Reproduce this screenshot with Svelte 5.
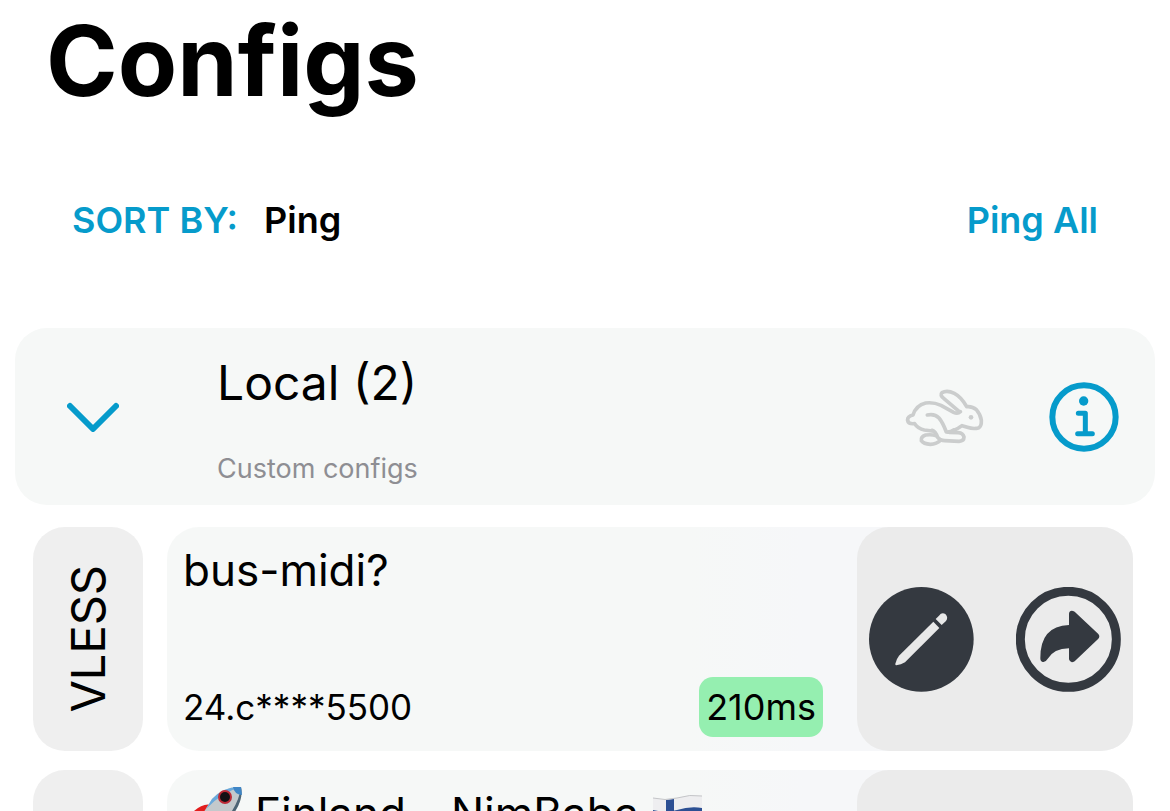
<script lang="ts">
  type Config = {
    name: string;
    protocol?: string;
    host?: string;
    ping?: number;
    rocket?: boolean;
    flag?: boolean;
  };

  const configs: Config[] = [
    { name: 'bus-midi?', protocol: 'VLESS', host: '24.c****5500', ping: 210 },
    { name: 'Finland - NimBaba', rocket: true, flag: true },
  ];

  let sortBy = $state('Ping');
  let open = $state(true);
</script>

<main>
  <h1>Configs</h1>

  <div class="toolbar">
    <label for="sort">SORT BY:</label>
    <select id="sort" bind:value={sortBy}>
      <option>Ping</option>
    </select>
    <button class="ping-all" type="button">Ping All</button>
  </div>

  <section class="group">
    <button class="toggle" type="button" aria-label="Toggle group" aria-expanded={open} onclick={() => (open = !open)}>
      <svg width="52" height="30" viewBox="0 0 52 30" fill="none" stroke="currentColor" stroke-width="6" stroke-linecap="round" stroke-linejoin="round">
        <path d="M3 4 L26 27 L49 4" />
      </svg>
    </button>
    <div class="group-text">
      <h2>Local ({configs.length})</h2>
      <p>Custom configs</p>
    </div>
    <button class="rabbit" type="button" aria-label="Fastest">
      <svg width="80" height="60" viewBox="45 81 240 180" fill="none" stroke="currentColor" stroke-width="11" stroke-linecap="round" stroke-linejoin="round">
        <path d="M211 155 Q203 163 191 157 L153 136 Q131 126 107 129 Q78 136 69 165 Q51 169 53 182 Q55 193 74 191 Q84 206 103 210 L126 213" />
        <path d="M207 154 L162 116 Q148 105 156 98 Q171 89 193 100 Q214 111 230 140 Q247 138 259 149 Q272 164 274 181 Q275 199 265 204 Q250 208 232 202 L216 197 Q203 207 189 212" />
        <path d="M112 165 Q134 160 147 174 Q158 187 169 216 Q181 217 191 210" />
        <path d="M126 211 Q137 215 143 232 Q151 242 164 242 L207 244 Q222 243 222 231 Q219 219 205 218 L178 217" />
        <path d="M137 227 Q127 223 107 225 Q92 230 94 242 Q101 252 121 253 Q140 252 153 240" />
        <circle cx="243" cy="172" r="7" fill="currentColor" stroke="none" />
      </svg>
    </button>
    <button class="info" type="button" aria-label="Group info">
      <svg width="70" height="70" viewBox="0 0 210 210" fill="none" stroke="currentColor" stroke-linecap="round" stroke-linejoin="round">
        <circle cx="105" cy="105" r="95" stroke-width="18" />
        <circle cx="104" cy="57" r="14" fill="currentColor" stroke="none" />
        <path d="M88 94 H109 V154 M86 155 H130" stroke-width="15" />
      </svg>
    </button>
  </section>

  {#if open}
    <ul>
      {#each configs as config}
        <li>
          <div class="protocol"><span>{config.protocol ?? ''}</span></div>
          <article>
            <div class="details">
              <h3>
                {#if config.rocket}
                  <svg class="emoji" viewBox="-5 0 60 54" role="img" aria-label="Rocket">
                    <path d="M24 19 Q14 16 3 28 L16 30Z" fill="#e21d1d" />
                    <path d="M38 34 Q41 44 29 53 L26 41Z" fill="#b51218" />
                    <path d="M53 1 Q36 0 24 13 L12 32 L24 44 L42 32 Q56 16 53 1Z" fill="#c3c9cc" />
                    <path d="M53 1 Q36 0 24 13 L18 23 Q34 6 53 1Z" fill="#69a9dc" />
                    <path d="M53 1 Q56 16 42 32 L36 36 Q51 18 53 1Z" fill="#4d6474" />
                    <path d="M53 1 L45 1 Q46 8 54 9Z" fill="#3f86c6" />
                    <circle cx="37" cy="11" r="7" fill="#bd2935" />
                    <circle cx="37" cy="11" r="5" fill="#141014" />
                    <path d="M12 34 L5 51 L22 44Z" fill="#f4a52b" />
                  </svg>
                {/if}
                <span>{config.name}</span>
                {#if config.flag}
                  <svg class="emoji" viewBox="0 0 60 54" role="img" aria-label="Flag of Finland">
                    <path d="M2 12 Q14 15 26 12 Q39 8 51 10 V42 Q39 40 26 44 Q14 47 2 44Z" fill="#eeeef0" />
                    <path d="M15 14 L23 13 V45 L15 46Z" fill="#2c4f93" />
                    <path d="M2 24 Q14 27 26 24 Q39 20 51 22 V31 Q39 29 26 33 Q14 36 2 33Z" fill="#2c4f93" />
                    <path d="M2 12 Q14 15 26 12 Q39 8 51 10" fill="none" stroke="#c4c5c8" />
                  </svg>
                {/if}
              </h3>
              <div class="meta">
                <span>{config.host ?? ''}</span>
                {#if config.ping}
                  <span class="ping">{config.ping}ms</span>
                {/if}
              </div>
            </div>
            <div class="actions">
              <button type="button" aria-label="Edit {config.name}">
                <svg width="105" height="105" viewBox="0 0 315 315">
                  <circle cx="157" cy="157" r="157" fill="currentColor" />
                  <path d="M193 104 L211 123 L108 226 Q96 233 82 235 Q78 235 79 230 Q82 216 90 206Z" fill="#e8e8e8" />
                  <path d="M200 96 L210 86 Q218 75 229 81 Q239 91 231 102 L218 114Z" fill="#e8e8e8" />
                </svg>
              </button>
              <button type="button" aria-label="Share {config.name}">
                <svg width="105" height="105" viewBox="0 0 315 315">
                  <circle cx="157" cy="157" r="144" fill="none" stroke="currentColor" stroke-width="27" />
                  <path d="M159 114 V80 Q161 67 176 74 L247 141 Q253 148 247 155 L176 223 Q163 231 159 217 V184 Q113 184 94 217 Q88 227 80 225 Q73 224 73 214 Q72 117 159 114Z" fill="currentColor" />
                </svg>
              </button>
            </div>
          </article>
        </li>
      {/each}
    </ul>
  {/if}
</main>

<style>
  :global(body) {
    margin: 0;
    background: #fff;
  }
  main {
    box-sizing: border-box;
    height: 100vh;
    overflow: hidden;
    font-family: Inter, 'Liberation Sans', sans-serif;
    color: #000;
  }
  h1, h2, h3, p, ul {
    margin: 0;
    padding: 0;
    font-weight: 400;
  }
  button, select {
    margin: 0;
    padding: 0;
    border: none;
    background: none;
    font: inherit;
    color: inherit;
    appearance: none;
    cursor: pointer;
  }
  svg {
    display: block;
    flex-shrink: 0;
  }
  h1 {
    padding: 0 46px;
    font-size: 97px;
    font-weight: 700;
    line-height: 122px;
  }
  .toolbar {
    display: flex;
    align-items: center;
    gap: 26px;
    padding: 0 72px;
    margin: 74px 0 84px;
    font-size: 36px;
    font-weight: 600;
    line-height: 48px;
  }
  .toolbar label, .ping-all {
    color: #069bcb;
  }
  .ping-all {
    margin-left: auto;
  }
  .group {
    display: flex;
    align-items: center;
    height: 177px;
    margin: 0 15px 22px;
    padding: 0 36px 0 52px;
    box-sizing: border-box;
    border-radius: 32px;
    background: #f6f8f7;
  }
  .toggle {
    color: #069bcb;
  }
  .group-text {
    flex: 1;
    padding: 4px 0 0 98px;
  }
  h2 {
    font-size: 48px;
    line-height: 64px;
  }
  .group-text p {
    margin-top: 36px;
    font-size: 27px;
    line-height: 36px;
    color: #8e8e93;
  }
  .rabbit {
    margin-right: 64px;
    color: #cbcdcd;
  }
  .info {
    color: #069bcb;
  }
  ul {
    display: flex;
    flex-direction: column;
    gap: 19px;
    padding: 0 37px 0 33px;
    list-style: none;
  }
  li {
    display: flex;
    gap: 24px;
    height: 224px;
    flex-shrink: 0;
  }
  .protocol {
    display: flex;
    align-items: center;
    justify-content: center;
    width: 110px;
    flex-shrink: 0;
    border-radius: 32px;
    background: #efefef;
    font-size: 47px;
    line-height: 60px;
  }
  .protocol span {
    writing-mode: vertical-rl;
    transform: rotate(180deg);
  }
  article {
    display: flex;
    flex: 1;
    min-width: 0;
    border-radius: 32px;
    background: linear-gradient(90deg, #f6f8f7 54%, #f6f7f9 66%);
  }
  .details {
    display: flex;
    flex-direction: column;
    justify-content: space-between;
    flex: 1;
    min-width: 0;
    box-sizing: border-box;
    padding: 16px 34px 14px 16px;
  }
  h3 {
    display: flex;
    align-items: center;
    gap: 12px;
    font-size: 44px;
    line-height: 54px;
    white-space: nowrap;
  }
  .emoji {
    width: 60px;
    height: 54px;
  }
  .meta {
    display: flex;
    align-items: center;
    justify-content: space-between;
    font-size: 35px;
    line-height: 60px;
  }
  .ping {
    padding: 0 7px;
    border-radius: 14px;
    background: #95efb0;
    font-size: 36px;
  }
  .actions {
    display: flex;
    align-items: center;
    justify-content: space-between;
    width: 276px;
    flex-shrink: 0;
    box-sizing: border-box;
    padding: 0 12px;
    border-radius: 32px;
    background: #ebebeb;
    color: #343940;
  }
</style>
